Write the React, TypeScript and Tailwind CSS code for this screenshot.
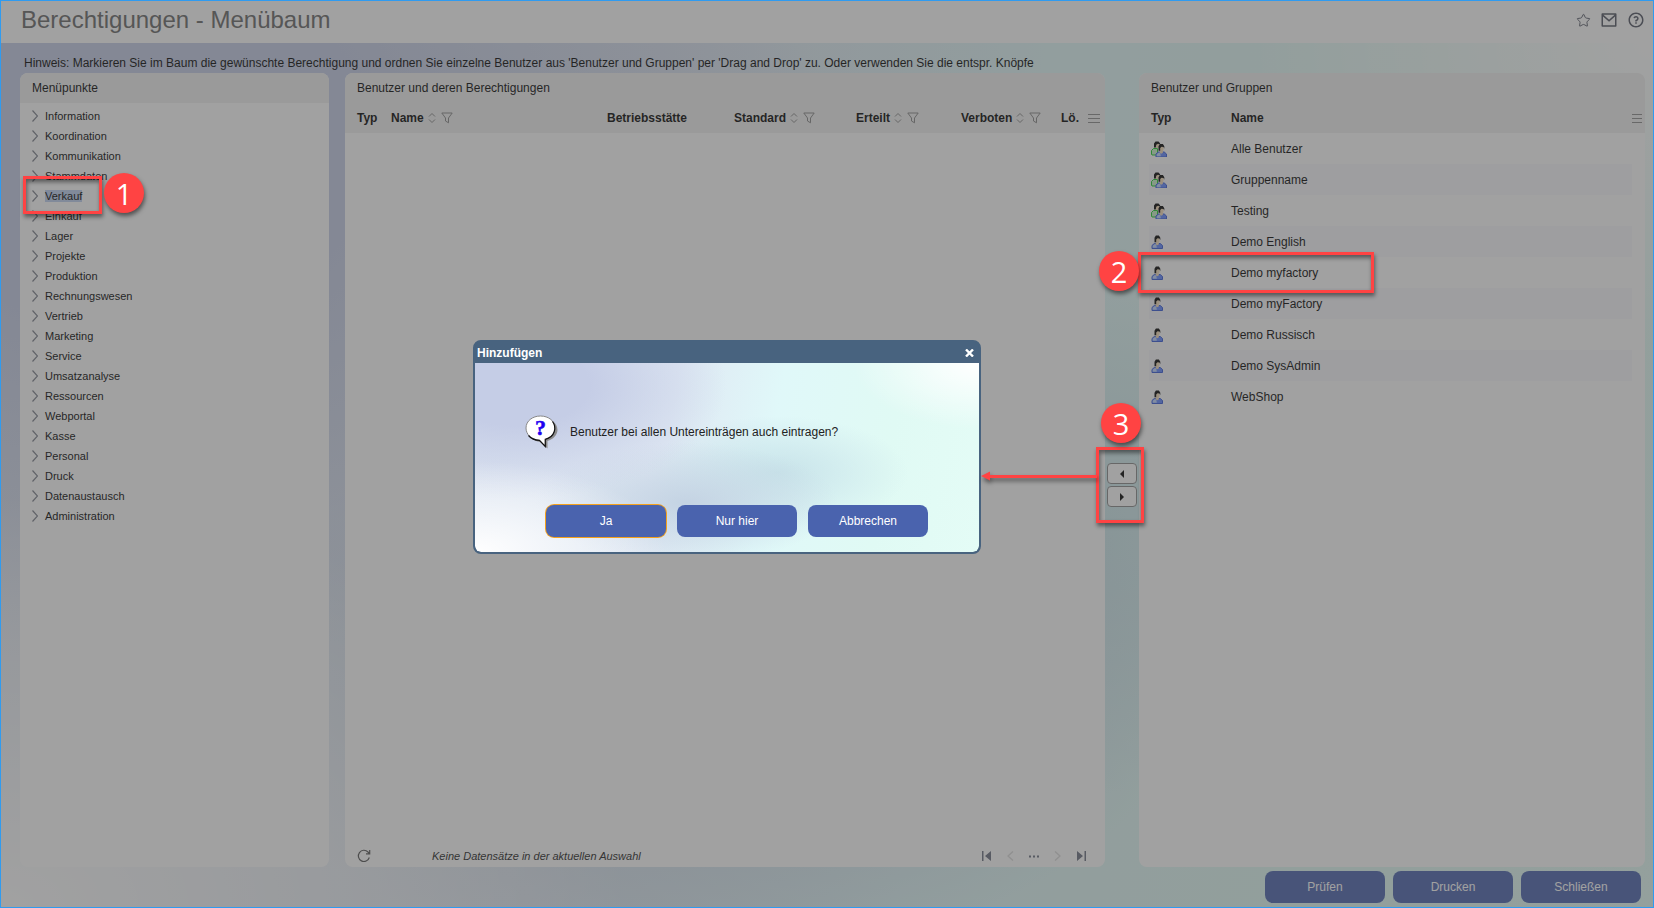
import { clsx } from "clsx"
import { Star } from "lucide-react"
import { RiMailLine, RiQuestionLine } from "react-icons/ri"

const menuItems = [
  "Information",
  "Koordination",
  "Kommunikation",
  "Stammdaten",
  "Verkauf",
  "Einkauf",
  "Lager",
  "Projekte",
  "Produktion",
  "Rechnungswesen",
  "Vertrieb",
  "Marketing",
  "Service",
  "Umsatzanalyse",
  "Ressourcen",
  "Webportal",
  "Kasse",
  "Personal",
  "Druck",
  "Datenaustausch",
  "Administration",
]

const columns = [
  { label: "Typ", width: "w-[34px]", sortable: false },
  { label: "Name", width: "", sortable: true },
  { label: "Betriebsstätte", width: "w-[127px]", sortable: false },
  { label: "Standard", width: "w-[122px]", sortable: true },
  { label: "Erteilt", width: "w-[105px]", sortable: true },
  { label: "Verboten", width: "w-[100px]", sortable: true },
  { label: "Lö.", width: "w-[27px]", sortable: false },
]

const users = [
  { name: "Alle Benutzer", group: true },
  { name: "Gruppenname", group: true },
  { name: "Testing", group: true },
  { name: "Demo English", group: false },
  { name: "Demo myfactory", group: false },
  { name: "Demo myFactory", group: false },
  { name: "Demo Russisch", group: false },
  { name: "Demo SysAdmin", group: false },
  { name: "WebShop", group: false },
]

const cloudBackground =
  "bg-[radial-gradient(ellipse_38%_48%_at_0%_100%,#ffffff_0%,#ffffff00_100%),radial-gradient(ellipse_25%_35%_at_100%_0%,#ffffff_0%,#ffffff00_100%),radial-gradient(ellipse_42%_60%_at_8%_12%,#c5cde6_0%,#c5cde6_35%,#c5cde600_100%),radial-gradient(ellipse_30%_32%_at_42%_74%,#c4d3e3_0%,#c4d3e300_100%),radial-gradient(ellipse_26%_30%_at_60%_58%,#c8e3e9_0%,#c8e3e900_100%),linear-gradient(100deg,#dce4f0_0%,#dfe8f3_38%,#e0f8f9_58%,#e0faf4_80%,#e4fcf6_100%)]"

function SortIcon() {
  return (
    <svg width="8" height="12" viewBox="0 0 8 12" fill="none" stroke="#888" aria-hidden="true">
      <path d="M1 4.5 4 1.5l3 3M1 7.5l3 3 3-3" />
    </svg>
  )
}

function FilterIcon() {
  return (
    <svg width="12" height="12" viewBox="0 0 12 12" fill="none" stroke="#888" aria-hidden="true">
      <path d="M.8 1h10.4L7.5 6v4.8l-3-1.8V6z" strokeLinejoin="round" />
    </svg>
  )
}

function MenuIcon({ width }: { width: number }) {
  return (
    <svg width={width} height="10" viewBox={`0 0 ${width} 10`} stroke="#8c8c8c" aria-hidden="true">
      <path d={`M0 1.5h${width}M0 5.5h${width}M0 9.5h${width}`} />
    </svg>
  )
}

function UserIcon({ group }: { group: boolean }) {
  return (
    <svg width="16" height="16" viewBox="0 0 16 16" aria-hidden="true">
      {group && (
        <g>
          <path d="M.5 13V9.5L2.500 7.500h4V14H1z" fill="#c8f0c8" stroke="#18d028" />
          <ellipse cx="6.200" cy="4.500" rx="2" ry="2.800" fill="#f4dcb8" />
          <path d="M3 6.500V2.400L4.500.6h3l1.600 1.600v1.400L7 2.800 5.200 3.800 4.800 6.500z" fill="#000" />
        </g>
      )}
      <g transform={group ? "translate(4.5 1.500)" : "translate(.5 0)"}>
        <path d="M.5 14.500v-3L2.800 9.500h5.900l2.300 2v3z" fill="#6088ff" stroke="#3458d8" />
        <path d="M1.200 13.700v-2L3 10.200h1.700l.6 3.500z" fill="#c0d6ff" />
        <path d="M4.200 8.500h3.200v1.700l-1.600 1-1.600-1z" fill="#f4dcb8" />
        <ellipse cx="5.900" cy="6" rx="2.200" ry="3" fill="#f4dcb8" />
        <path d="M3 8.200V3.800l1.400-2.200h3L8.800 3.800v2.400L8 4.400 6 4.200 4.700 5.400v2.800z" fill="#000" />
      </g>
    </svg>
  )
}

function QuestionBubble() {
  return (
    <svg width="34" height="34" viewBox="0 0 34 34" aria-hidden="true" className="shrink-0">
      <path
        d="M18 3C26 3 32.500 8 32.500 15 32.500 20 28 24.500 22.500 26V33.500L15 27C8 26 3 20 3 14.500 3 8 9 3 18 3Z"
        fill="#8c8c8c"
      />
      <path
        d="M15.500 1C23.500 1 30 6 30 13 30 18.500 25.500 23 20.300 24.300V31.500L14.500 25.300C6 25 1 19 1 13 1 6 7.500 1 15.500 1Z"
        fill="#fff"
        stroke="#888"
      />
      <path
        d="M27.500 6.500C32 12.500 30 22 20.300 24.300V31.500L14.500 25.300C10 25.200 6 23.500 3.500 20.500"
        fill="none"
        stroke="#111"
        strokeWidth="1.2"
      />
      <text
        x="15.500"
        y="20"
        textAnchor="middle"
        fill="#1e00f0"
        stroke="#1e00f0"
        strokeWidth=".5"
        className="font-['Liberation_Serif',serif] text-[22px] font-bold"
      >
        ?
      </text>
    </svg>
  )
}

function PanelTitle({ children }: { children: string }) {
  return <h2 className="flex h-[30px] shrink-0 items-center bg-[#f0f0f0] px-3 text-xs">{children}</h2>
}

function ActionButton({ label, focused = false }: { label: string; focused?: boolean }) {
  return (
    <button
      type="button"
      className={clsx(
        "h-8 w-[120px] rounded-lg bg-[#4a63ae] text-xs text-white",
        focused && "ring-1 ring-[#f5a11c]",
      )}
    >
      {label}
    </button>
  )
}

function MenuTree() {
  return (
    <section className="flex flex-col overflow-hidden rounded-lg bg-white">
      <PanelTitle>Menüpunkte</PanelTitle>
      <ul className="px-3 pt-[3px] text-[11px] leading-5">
        {menuItems.map((item) => (
          <li key={item}>
            <button type="button" className="flex h-5 items-center gap-[7px]">
              <svg width="6" height="12" viewBox="0 0 6 12" fill="none" stroke="#7c808c" aria-hidden="true">
                <path d="m.5.5 5 5.500-5 5.500" strokeWidth="1.2" />
              </svg>
              <span className={clsx("leading-3", item === "Verkauf" && "bg-[#bdd0f0]")}>{item}</span>
            </button>
          </li>
        ))}
      </ul>
    </section>
  )
}

function PermissionPanel() {
  return (
    <section className="flex flex-col overflow-hidden rounded-lg bg-white">
      <PanelTitle>Benutzer und deren Berechtigungen</PanelTitle>
      <table className="w-full table-fixed text-xs">
        <thead>
          <tr className="h-[30px] bg-[#f0f0f0]">
            {columns.map((col) => (
              <th key={col.label} scope="col" className={clsx("py-0 pr-0 pl-3 text-left", col.width)}>
                <span className="flex items-center whitespace-nowrap">
                  {col.label}
                  {col.sortable && (
                    <>
                      <button type="button" aria-label={`${col.label} sortieren`} className="ml-1">
                        <SortIcon />
                      </button>
                      <button type="button" aria-label={`${col.label} filtern`} className="ml-[5px]">
                        <FilterIcon />
                      </button>
                    </>
                  )}
                </span>
              </th>
            ))}
            <th className="w-[29px] py-0 pr-0 pl-3">
              <button type="button" aria-label="Spaltenmenü" className="block">
                <MenuIcon width={12} />
              </button>
            </th>
          </tr>
        </thead>
      </table>
      <div className="flex-1" />
      <div className="flex h-[22px] items-center pr-[19px] pl-3 text-[11px]">
        <button type="button" aria-label="Aktualisieren">
          <svg width="14" height="14" viewBox="0 0 14 14" fill="none" stroke="#555" strokeWidth="1.2" aria-hidden="true">
            <path d="M12.300 8.500A5.600 5.600 0 1 1 11 3l1.500 1.500M12.700 1v3.800H9" />
          </svg>
        </button>
        <em className="ml-[61px] flex-1 text-[#222]">Keine Datensätze in der aktuellen Auswahl</em>
        <nav aria-label="Seiten" className="flex items-center gap-[15px]">
          <button type="button" aria-label="Erste Seite">
            <svg width="10" height="10" viewBox="0 0 10 10" fill="#6a7080" aria-hidden="true">
              <path d="M0 0h1.500v10H0zM9 0v10L3 5z" />
            </svg>
          </button>
          <button type="button" aria-label="Vorherige Seite">
            <svg width="7" height="10" viewBox="0 0 7 10" fill="none" stroke="#ddd" strokeWidth="1.500" aria-hidden="true">
              <path d="M6 .5 1 5l5 4.500" />
            </svg>
          </button>
          <button type="button" aria-label="Seite wählen">
            <svg width="10" height="10" viewBox="0 0 10 10" fill="#6a7080" aria-hidden="true">
              <path d="M0 4.500h2v2H0zM4 4.500h2v2H4zM8 4.500h2v2H8z" />
            </svg>
          </button>
          <button type="button" aria-label="Nächste Seite">
            <svg width="7" height="10" viewBox="0 0 7 10" fill="none" stroke="#ddd" strokeWidth="1.500" aria-hidden="true">
              <path d="M1 .5 6 5 1 9.500" />
            </svg>
          </button>
          <button type="button" aria-label="Letzte Seite">
            <svg width="10" height="10" viewBox="0 0 10 10" fill="#6a7080" aria-hidden="true">
              <path d="M8.500 0H10v10H8.500zM1 0v10l6-5z" />
            </svg>
          </button>
        </nav>
      </div>
    </section>
  )
}

function TransferButtons() {
  const button =
    "flex h-[21px] w-[30px] items-center justify-center rounded-[4px] border border-[#8a8a8a] bg-white"
  return (
    <div className="flex flex-col items-center justify-center gap-0.5 pt-[30px]">
      <button type="button" aria-label="Hinzufügen" className={button}>
        <svg width="4" height="8" viewBox="0 0 4 8" aria-hidden="true">
          <path d="M4 0v8L0 4z" />
        </svg>
      </button>
      <button type="button" aria-label="Entfernen" className={button}>
        <svg width="4" height="8" viewBox="0 0 4 8" aria-hidden="true">
          <path d="M0 0v8l4-4z" />
        </svg>
      </button>
    </div>
  )
}

function UserPanel() {
  return (
    <section className="overflow-hidden rounded-lg bg-white">
      <PanelTitle>Benutzer und Gruppen</PanelTitle>
      <table className="w-full table-fixed text-xs">
        <thead>
          <tr className="h-[30px] bg-[#f0f0f0] text-left">
            <td className="w-[10px]" />
            <th scope="col" className="w-[80px] py-0 pr-0 pl-0.5">
              Typ
            </th>
            <th scope="col" className="py-0 pr-0 pl-0.5">
              Name
            </th>
            <th className="w-[13px] p-0">
              <button type="button" aria-label="Spaltenmenü" className="block">
                <MenuIcon width={10} />
              </button>
            </th>
          </tr>
        </thead>
        <tbody>
          {users.map((user, i) => (
            <tr key={user.name} className="h-[31px]">
              <td />
              <td className={clsx("py-0 pr-0 pl-0.5", i % 2 === 1 && "bg-[#f8f8fc]")}>
                <UserIcon group={user.group} />
              </td>
              <td className={clsx("py-0 pr-0 pl-0.5", i % 2 === 1 && "bg-[#f8f8fc]")}>{user.name}</td>
              <td />
            </tr>
          ))}
        </tbody>
      </table>
    </section>
  )
}

function AddDialog() {
  return (
    <div
      role="dialog"
      aria-modal="true"
      aria-labelledby="add-title"
      className="absolute top-[340px] left-[473px] flex h-[214px] w-[508px] flex-col overflow-hidden rounded-lg border-2 border-[#48637f] bg-[#48637f] text-xs text-[#222]"
    >
      <div className="flex h-[21px] shrink-0 items-center justify-between pr-[5px] pl-0.5 text-white">
        <h2 id="add-title" className="font-bold">
          Hinzufügen
        </h2>
        <button type="button" aria-label="Schließen">
          <svg width="9" height="8" viewBox="0 0 9 8" stroke="#fff" strokeWidth="2.4" aria-hidden="true">
            <path d="m1 .5 7 7M8 .5l-7 7" />
          </svg>
        </button>
      </div>
      <div className={clsx("flex flex-1 flex-col justify-between rounded-b-md pt-[52px] pb-[15px]", cloudBackground)}>
        <div className="flex items-center gap-[11px] pl-[50px]">
          <QuestionBubble />
          <p>Benutzer bei allen Untereinträgen auch eintragen?</p>
        </div>
        <div className="flex justify-center gap-[11px] pl-5">
          <ActionButton label="Ja" focused />
          <ActionButton label="Nur hier" />
          <ActionButton label="Abbrechen" />
        </div>
      </div>
    </div>
  )
}

function Marker({ step, className }: { step: number; className: string }) {
  return (
    <span
      className={clsx(
        "absolute flex size-10 items-center justify-center rounded-full bg-[#ff4343] font-['Open_Sans',sans-serif] text-[29px] leading-none text-white shadow-[1px_3px_4px_rgba(0,0,0,0.5)]",
        className,
      )}
    >
      {step}
    </span>
  )
}

function Frame({ className }: { className: string }) {
  return (
    <span
      className={clsx(
        "absolute border-3 border-[#ff4343] shadow-[1px_3px_4px_rgba(0,0,0,0.45),inset_1px_3px_4px_rgba(0,0,0,0.45)]",
        className,
      )}
    />
  )
}

// Numbered steps that lie on top of the dimmed page
function Annotations() {
  return (
    <div className="pointer-events-none absolute inset-0">
      <Frame className="top-[176px] left-[23px] h-[38px] w-[79px]" />
      <Marker step={1} className="top-[173px] left-[104px]" />
      <Frame className="top-[252px] left-[1138px] h-[41px] w-[236px]" />
      <Marker step={2} className="top-[251px] left-[1099px]" />
      <Frame className="top-[447px] left-[1096px] h-[76px] w-[48px]" />
      <Marker step={3} className="top-[403px] left-[1101px]" />
      <svg
        width="116"
        height="10"
        viewBox="0 0 116 10"
        aria-hidden="true"
        className="absolute top-[471px] left-[981px] drop-shadow-[1px_3px_2px_rgba(0,0,0,0.5)]"
      >
        <path d="M0 5 9 .5V4H116V7H9v2.500z" fill="#ff4343" />
      </svg>
    </div>
  )
}

export default function App() {
  return (
    <div className="relative flex min-h-screen flex-col font-['Liberation_Sans',Arial,sans-serif] text-black">
      <header className="flex h-[43px] items-center justify-between bg-white pr-[9px] pl-[21px]">
        <h1 className="pb-1 text-2xl leading-8 text-[#666]">Berechtigungen - Menübaum</h1>
        <div className="flex items-center gap-[9px] pb-[3px] text-[#505462]">
          <button type="button" aria-label="Favorit">
            <Star size={15} strokeWidth={1.5} />
          </button>
          <button type="button" aria-label="Nachricht">
            <RiMailLine size={18} />
          </button>
          <button type="button" aria-label="Hilfe">
            <RiQuestionLine size={18} />
          </button>
        </div>
      </header>

      <div className={clsx("flex flex-1 flex-col", cloudBackground)}>
        <p className="pt-3 pb-0.5 pl-6 text-xs">
          Hinweis: Markieren Sie im Baum die gewünschte Berechtigung und ordnen Sie einzelne Benutzer aus 'Benutzer und
          Gruppen' per 'Drag and Drop' zu. Oder verwenden Sie die entspr. Knöpfe
        </p>
        <main className="grid flex-1 grid-cols-[309fr_16px_760fr_34px_506fr] pr-[9px] pl-5">
          <MenuTree />
          <div />
          <PermissionPanel />
          <TransferButtons />
          <UserPanel />
        </main>
        <footer className="flex justify-end gap-2 pt-1 pr-[13px] pb-[5px]">
          <ActionButton label="Prüfen" />
          <ActionButton label="Drucken" />
          <ActionButton label="Schließen" />
        </footer>
      </div>

      <div className="absolute inset-0 border border-[#2f9bf0] bg-[#464646]/51" />
      <AddDialog />
      <Annotations />
    </div>
  )
}
